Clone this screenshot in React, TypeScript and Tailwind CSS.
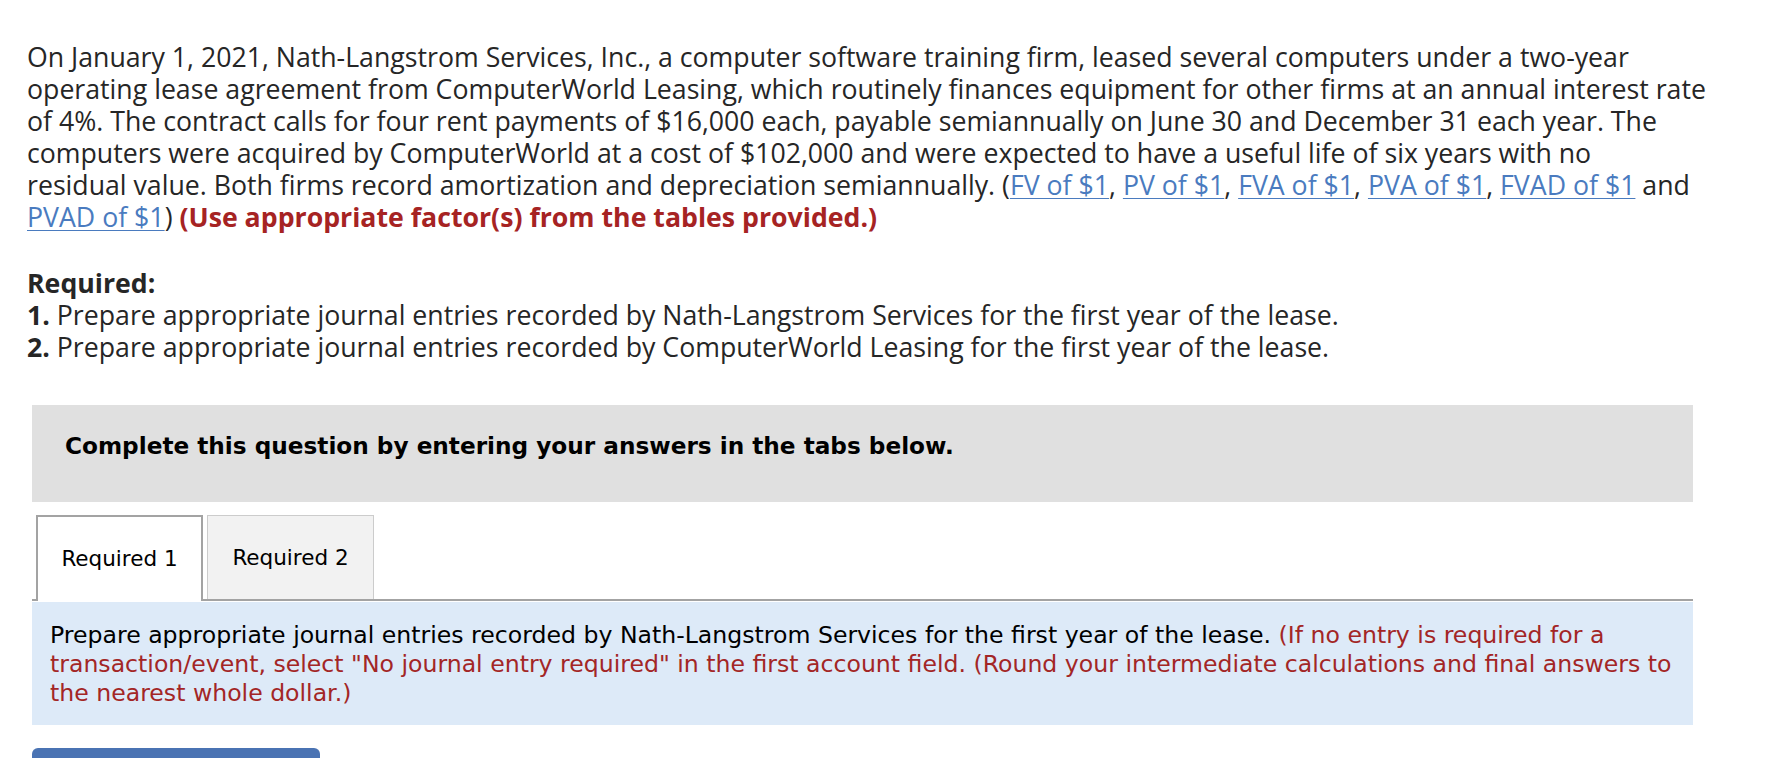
import React from "react";

function TableLink({ label }: { label: string }) {
	return (
		<a href="#" className="text-[#4a7bbf] underline underline-offset-[3px] decoration-1">
			{label}
		</a>
	);
}

export default function App() {
	return (
		<div className="w-[1772px] h-[758px] overflow-hidden bg-white">
			<div className="pl-[27px] pr-[4px] pt-[41px] font-['Open_Sans',sans-serif] text-[26.7px]/[32px] text-[#262626]">
				<p className="whitespace-nowrap">
					On January 1, 2021, Nath-Langstrom Services, Inc., a computer software training firm, leased several computers under a two-year
					<br />
					operating lease agreement from ComputerWorld Leasing, which routinely finances equipment for other firms at an annual interest rate
					<br />
					of 4%. The contract calls for four rent payments of $16,000 each, payable semiannually on June 30 and December 31 each year. The
					<br />
					computers were acquired by ComputerWorld at a cost of $102,000 and were expected to have a useful life of six years with no
					<br />
					residual value. Both firms record amortization and depreciation semiannually. (<TableLink label="FV of $1" />,{" "}
					<TableLink label="PV of $1" />, <TableLink label="FVA of $1" />, <TableLink label="PVA of $1" />,{" "}
					<TableLink label="FVAD of $1" /> and
					<br />
					<TableLink label="PVAD of $1" />){" "}
					<strong className="text-[#a62323] font-bold">(Use appropriate factor(s) from the tables provided.)</strong>
				</p>
				<div className="mt-[34px]">
					<p className="font-bold">Required:</p>
					<p>
						<strong>1.</strong> Prepare appropriate journal entries recorded by Nath-Langstrom Services for the first year of the lease.
					</p>
					<p>
						<strong>2.</strong> Prepare appropriate journal entries recorded by ComputerWorld Leasing for the first year of the lease.
					</p>
				</div>
			</div>

			<div className="ml-[32px] w-[1661px] mt-[42px] font-['DejaVu_Sans',sans-serif]">
				<div className="h-[97px] bg-[#e0e0e0] pl-[33px] pb-[16px] flex items-center">
					<p className="font-bold text-[23.2px]/[28px] text-black">
						Complete this question by entering your answers in the tabs below.
					</p>
				</div>

				<div className="mt-[13px] flex items-end gap-[4px] pl-[4px] h-[86px] border-b-2 border-[#a3a3a3] text-[21.5px]/[26px] text-black">
					<button className="h-[86px] w-[167px] -mb-[2px] bg-white border-2 border-b-0 border-[#a3a3a3]">
						Required 1
					</button>
					<button className="h-[84px] w-[167px] bg-[#f2f2f2] border border-b-0 border-[#cccccc]">
						Required 2
					</button>
				</div>

				<div className="mt-px bg-[#ddeaf8] pl-[18px] pr-[14px] pt-[19px] pb-[17px] text-[23.6px]/[29px] text-black">
					Prepare appropriate journal entries recorded by Nath-Langstrom Services for the first year of the lease.{" "}
					<span className="text-[#a32626]">
						(If no entry is required for a transaction/event, select "No journal entry required" in the first
						account field. (Round your intermediate calculations and final answers to the nearest whole dollar.)
					</span>
				</div>

				<button aria-label="Next" className="block mt-[23px] w-[288px] h-[56px] bg-[#4a73b3] rounded-t-[6px]" />
			</div>
		</div>
	);
}
